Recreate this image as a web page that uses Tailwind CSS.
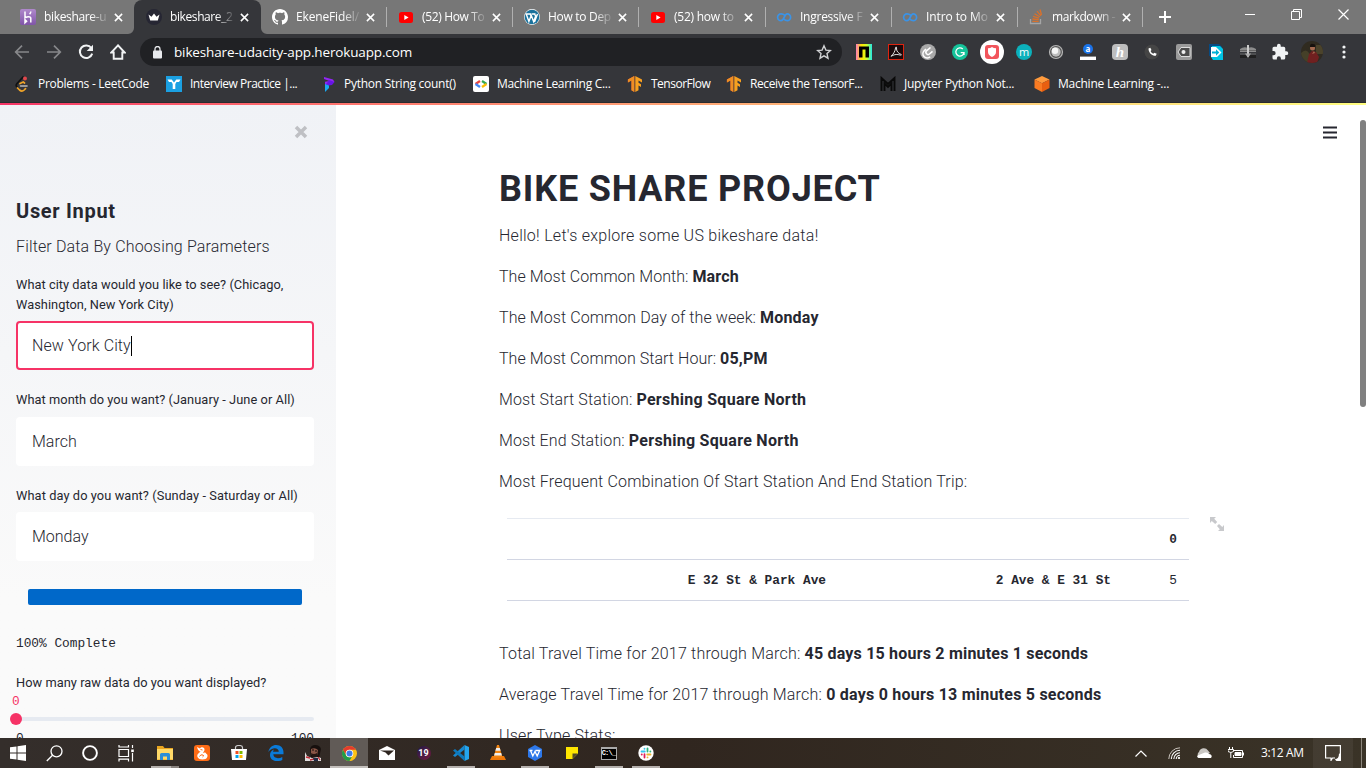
<!DOCTYPE html>
<html lang="en">
<head>
<meta charset="utf-8">
<title>bikeshare_2</title>
<script src="https://cdn.jsdelivr.net/npm/@tailwindcss/browser@4"></script>
</head>
<body class="flex h-[768px] w-[1366px] flex-col overflow-hidden bg-white font-['Roboto',sans-serif] text-[#262730]">

<svg class="hidden">
  <symbol id="close" viewBox="0 0 10 10"><path d="M1 1l8 8M9 1L1 9" stroke="#fff" stroke-width="1.7"/></symbol>
  <symbol id="youtube" viewBox="0 0 16 16"><rect x="1" y="3" width="14" height="11" rx="2.5" fill="#f00"/><path d="M6.3 6v5l4.3-2.5z" fill="#fff"/></symbol>
  <symbol id="infinity" viewBox="0 0 16 16"><path d="M8.6 6.200C7.600 5.200 6.400 4.800 5 4.800a3.400 3.400 0 0 0 0 6.800C8.500 11.600 8 4.800 11.200 4.800a3.400 3.400 0 0 1 0 6.800c-1.300 0-2.300-.5-3.300-1.500" fill="none" stroke="#3b93e6" stroke-width="1.700"/></symbol>
  <symbol id="tensorflow" viewBox="0 0 16 16"><path d="M7.300 0L.8 3.600v3l3.600-2v9.600L7.300 16z" fill="#e55b2d"/><path d="M7.300 0L1 3.600v2.900l3.500-2v9.700L7.300 16z" fill="#ed8e24"/><path d="M8.300 0l6.700 3.600v3l-3.500-2v2.200l2.500 1.500v2.800l-2.500-1.500v4.600L8.300 16z" fill="#f8a020"/></symbol>
</svg>

<header class="flex h-[103px] shrink-0 flex-col border-b border-[#2a2b2e] bg-[#35363a] font-['Open_Sans',sans-serif] text-xs text-white">
  <!-- Tabs -->
  <div class="flex h-[34px] bg-[#777777] pl-2">
    <div class="flex w-[126px] items-center pl-3">
      <svg class="size-4 shrink-0" viewBox="0 0 16 16"><defs><linearGradient id="hk" x2="0" y2="1"><stop stop-color="#b089cc"/><stop offset="1" stop-color="#8055a8"/></linearGradient></defs><rect width="16" height="16" rx="2" fill="url(#hk)"/><path d="M5 2.500v6.200c2-.9 5.800-1.800 5.800.6v4.200M10.800 2.500c0 1.200-.5 2-1.200 2.800M5 10.800v3l1.600-1.500z" fill="none" stroke="#fff" stroke-width="1.500"/></svg>
      <span class="ml-2 w-[66px] overflow-hidden whitespace-nowrap tracking-[-0.35px] mask-r-from-70%">bikeshare-u</span><svg class="ml-1 size-[9px]"><use href="#close"/></svg>
    </div>
    <div class="relative flex w-[127px] items-center rounded-t-lg bg-[#35363a] pl-3">
      <svg class="absolute -left-[6px] bottom-0 size-[6px]" viewBox="0 0 6 6"><path d="M6 0v6H0a6 6 0 0 0 6-6" fill="#35363a"/></svg>
      <svg class="absolute -right-[6px] bottom-0 size-[6px]" viewBox="0 0 6 6"><path d="M0 0v6h6a6 6 0 0 1-6-6" fill="#35363a"/></svg>
      <svg class="size-4 shrink-0" viewBox="0 0 16 16"><circle cx="8" cy="8" r="8" fill="#262633"/><path d="M2.500 5.500l3 2.200L8 4.500l2.500 3.200 3-2.200-1.700 6H4.200z" fill="#fff"/></svg>
      <span class="ml-2 w-[66px] overflow-hidden whitespace-nowrap tracking-[-0.4px] mask-r-from-70%">bikeshare_2</span><svg class="ml-1 size-[9px]"><use href="#close"/></svg>
    </div>
    <div class="flex w-[125px] items-center pl-[11px]">
      <svg class="size-4 shrink-0" viewBox="0 0 16 16"><path fill="#fff" d="M8 0C3.580 0 0 3.580 0 8c0 3.540 2.290 6.530 5.470 7.590.4.070.55-.17.55-.38 0-.19-.01-.82-.01-1.490-2.010.37-2.530-.49-2.690-.94-.09-.23-.48-.94-.82-1.130-.28-.15-.68-.52-.01-.53.63-.01 1.080.58 1.230.82.72 1.210 1.870.87 2.330.66.07-.52.28-.87.51-1.070-1.780-.2-3.640-.89-3.640-3.950 0-.87.31-1.590.82-2.150-.08-.2-.36-1.020.08-2.120 0 0 .67-.21 2.200.82.64-.18 1.320-.27 2-.27s1.360.09 2 .27c1.530-1.040 2.200-.82 2.200-.82.44 1.100.16 1.920.08 2.120.51.56.82 1.270.82 2.150 0 3.070-1.870 3.750-3.650 3.950.29.25.54.73.54 1.480 0 1.070-.01 1.930-.01 2.200 0 .21.15.46.55.38A8 8 0 0 0 16 8c0-4.420-3.580-8-8-8"/></svg>
      <span class="ml-2 w-[66px] overflow-hidden whitespace-nowrap tracking-[-0.15px] mask-r-from-70%">EkeneFidel/</span><svg class="ml-1 size-[9px]"><use href="#close"/></svg>
    </div>
    <div class="flex w-[126px] items-center"><i class="mr-[11px] h-5 w-px bg-[#b0b0b0]"></i>
      <svg class="size-4 shrink-0"><use href="#youtube"/></svg>
      <span class="ml-2 w-[66px] overflow-hidden whitespace-nowrap tracking-[-0.35px] mask-r-from-70%">(52) How To</span><svg class="ml-1 size-[9px]"><use href="#close"/></svg>
    </div>
    <div class="flex w-[126px] items-center"><i class="mr-[11px] h-5 w-px bg-[#b0b0b0]"></i>
      <svg class="size-4 shrink-0" viewBox="0 0 16 16"><circle cx="8" cy="8" r="7.900" fill="#fff"/><circle cx="8" cy="8" r="7.300" fill="#19719c"/><path d="M2.200 5l2.700 7.500L7 7 6.200 5M6.700 5l3 7.800L11.500 7.500c.5-1.600-1.500-2-1-3.200M1.500 5h6M8 5h3.500M10.500 13l3-8" stroke="#fff" stroke-width="1.400" fill="none"/></svg>
      <span class="ml-2 w-[66px] overflow-hidden whitespace-nowrap tracking-[-0.3px] mask-r-from-70%">How to Dep</span><svg class="ml-1 size-[9px]"><use href="#close"/></svg>
    </div>
    <div class="flex w-[127px] items-center"><i class="mr-[11px] h-5 w-px bg-[#b0b0b0]"></i>
      <svg class="size-4 shrink-0"><use href="#youtube"/></svg>
      <span class="ml-2 w-[66px] overflow-hidden whitespace-nowrap tracking-[-0.25px] mask-r-from-70%">(52) how to</span><svg class="ml-1 size-[9px]"><use href="#close"/></svg>
    </div>
    <div class="flex w-[126px] items-center"><i class="mr-[10px] h-5 w-px bg-[#b0b0b0]"></i>
      <svg class="size-4 shrink-0"><use href="#infinity"/></svg>
      <span class="ml-2 w-[66px] overflow-hidden whitespace-nowrap tracking-[-0.25px] mask-r-from-70%">Ingressive F</span><svg class="ml-1 size-[9px]"><use href="#close"/></svg>
    </div>
    <div class="flex w-[126px] items-center"><i class="mr-[10px] h-5 w-px bg-[#b0b0b0]"></i>
      <svg class="size-4 shrink-0"><use href="#infinity"/></svg>
      <span class="ml-2 w-[66px] overflow-hidden whitespace-nowrap tracking-[-0.1px] mask-r-from-70%">Intro to Mo</span><svg class="ml-1 size-[9px]"><use href="#close"/></svg>
    </div>
    <div class="flex w-[125px] items-center"><i class="mr-[10px] h-5 w-px bg-[#b0b0b0]"></i>
      <svg class="size-4 shrink-0" viewBox="0 0 16 16" fill="none"><path d="M2.500 10v4.500h10V10" stroke="#a5a5a5" stroke-width="1.300"/><path d="M4.300 12.300h6.400M4.400 10l6.300.7M5 7.400l6 1.800M6.500 4.700l5.300 3.100M9 2.200l4 4.700M12 .5l1.500 5.500" stroke="#d9712b" stroke-width="1.300"/></svg>
      <span class="ml-2 w-[66px] overflow-hidden whitespace-nowrap tracking-[-0.4px] mask-r-from-70%">markdown -</span><svg class="ml-1 size-[9px]"><use href="#close"/></svg>
    </div>
    <div class="flex w-[52px] items-center"><i class="mr-4 h-5 w-px bg-[#b0b0b0]"></i>
      <svg class="size-3" viewBox="0 0 12 12"><path d="M6 0v12M0 6h12" stroke="#fff" stroke-width="2"/></svg>
    </div>
    <div class="flex h-7 flex-1 items-center justify-end gap-9 pr-[17px]">
      <svg class="size-[10px]" viewBox="0 0 10 10"><path d="M0 5.500h10" stroke="#fff"/></svg>
      <svg class="size-[11px]" viewBox="0 0 11 11" fill="none" stroke="#fff"><path d="M.5 2.500h8v8h-8zM2.500 2.500v-2h8v8h-2"/></svg>
      <svg class="size-[11px]" viewBox="0 0 11 11"><path d="M.5.5l10 10M10.500.5l-10 10" stroke="#fff" stroke-width="1.200"/></svg>
    </div>
  </div>

  <!-- Toolbar -->
  <div class="flex h-[36px] items-center pr-[6px]">
    <div class="flex w-[140px] items-center gap-4 pl-[14px]">
      <svg class="size-4" viewBox="0 0 16 16" fill="none" stroke="#87888b" stroke-width="1.700"><path d="M15 8H2M8 1.700L1.700 8 8 14.300"/></svg>
      <svg class="size-4" viewBox="0 0 16 16" fill="none" stroke="#87888b" stroke-width="1.700"><path d="M1 8h13M8 1.700L14.300 8 8 14.300"/></svg>
      <svg class="size-4" viewBox="0 0 16 16" fill="none"><path d="M13.300 4A6.300 6.300 0 1 0 14.200 9.600" stroke="#f1f3f4" stroke-width="2"/><path d="M15 .8v6.300H8.700z" fill="#f1f3f4"/></svg>
      <svg class="size-4" viewBox="0 0 16 16"><path d="M8 1.300L1.300 8.500h2.400v6.300h8.600V8.500h2.400z" fill="none" stroke="#f1f3f4" stroke-width="1.900"/></svg>
    </div>
    <div class="flex h-7 w-[702px] items-center rounded-full bg-[#202124] pr-[10px] pl-[13px]">
      <svg class="h-[13px] w-[9px]" viewBox="0 0 9 13"><rect y="4.500" width="9" height="8" rx="1" fill="#e8eaed"/><path d="M2 5V3a2.500 2.500 0 0 1 5 0v2" fill="none" stroke="#e8eaed" stroke-width="1.300"/></svg>
      <span class="ml-3 flex-1 text-[13.500px] tracking-[-0.140px]">bikeshare-udacity-app.herokuapp.com</span>
      <svg class="size-4" viewBox="0 0 16 16"><path d="M8 1.800l1.900 4.300 4.500.4-3.400 3.100 1 4.600L8 11.800l-4 2.400 1-4.600-3.400-3.100 4.500-.4z" fill="none" stroke="#d0d1d3" stroke-width="1.400"/></svg>
    </div>
    <div class="ml-[6px] grid flex-1 grid-cols-16 place-items-center">
      <svg class="size-4" viewBox="0 0 16 16"><defs><linearGradient id="pg"><stop stop-color="#ff7dbb"/><stop offset=".35" stop-color="#ffe600"/><stop offset=".65" stop-color="#d4ff22"/><stop offset="1" stop-color="#22e8e8"/></linearGradient></defs><rect width="16" height="16" fill="url(#pg)"/><path d="M3 2.500h10v11H9.500V5.500h-3v8H3z" fill="#000"/></svg>
      <svg class="size-4" viewBox="0 0 16 16"><rect x=".5" y=".5" width="15" height="15" fill="#1c0a0c" stroke="#dd2410"/><path d="M3 12.200c2-1.400 4.300-5 4.600-8.500 0-1.300 1.200-1 .9.300-.4 3 2 5.500 4.400 6.300 1 .4.500 1.200-.6.800-2.800-1-5.600-.9-8.300.7-.8.500-1.300.600-1 .4" fill="none" stroke="#ddd" stroke-width="1"/></svg>
      <svg class="size-4" viewBox="0 0 16 16"><circle cx="8" cy="8" r="8" fill="#a9a9a9"/><path d="M10.500 3.500L6.500 6.800a2.200 2.200 0 0 0 3 3.200l3-2.600M6 5L4.200 6.800a4.200 4.200 0 0 0 6 6" fill="none" stroke="#fff" stroke-width="1.600"/></svg>
      <svg class="size-4" viewBox="0 0 16 16"><circle cx="8" cy="8" r="8" fill="#15c39a"/><path d="M10.800 5A4.100 4.100 0 1 0 12 8.600H8.700M12 8.500V11" fill="none" stroke="#fff" stroke-width="1.300"/></svg>
      <svg class="size-6" viewBox="0 0 24 24"><circle cx="12" cy="12" r="12" fill="#fff"/><rect x="5" y="5" width="14" height="14" rx="3" fill="#f2555c"/><path d="M8 8.300q2.500 0 4-1.200 1.500 1.200 4 1.200V12q0 3-4 5-4-2-4-5z" fill="#fff"/></svg>
      <span class="flex size-4 items-center justify-center rounded-full bg-[#0cb1bb] pb-[2px] text-[11px] leading-none">m</span>
      <svg class="size-4" viewBox="0 0 16 16"><circle cx="8" cy="8" r="6.500" fill="#555" stroke="#b5b5b5" stroke-width="1.200"/><circle cx="8" cy="8" r="4.700" fill="#bdbdbd"/><circle cx="7" cy="6.800" r="3.200" fill="#f5f5f5"/></svg>
      <span class="flex h-4 w-4 flex-col items-center justify-between"><b class="flex size-[10px] items-center justify-center rounded-full bg-[#1a73e8] pb-px text-[8px] leading-none">a</b><i class="h-[4px] w-4 border-t border-[#888] bg-white"></i></span>
      <span class="flex size-4 items-center justify-center rounded-sm bg-[#bdbdbd] font-['Liberation_Serif',serif] text-[15px] leading-none font-bold italic">h</span>
      <svg class="size-4" viewBox="0 0 16 16"><circle cx="8" cy="8" r="7.500" fill="#454545"/><path d="M4.500 4.500c0 4 3 7.300 7.300 7.300l.9-2-2.400-1.100-1 1c-1.200-.5-2.200-1.500-2.700-2.800l.9-.9L6.300 3.700z" fill="#fff"/></svg>
      <svg class="size-4" viewBox="0 0 16 16"><rect width="16" height="16" rx="2" fill="#9a9a9a"/><path d="M2 8l3-4.500h9v9H5z" fill="#4d4d4d" stroke="#ddd"/><circle cx="7.500" cy="8" r="2" fill="#eee"/></svg>
      <svg class="size-4" viewBox="0 0 16 16"><path d="M1 0h10l3 3v9H1z" fill="#064a82"/><path d="M4 2h8l3 3v11H5l-2-3z" fill="#00c3e3"/><path d="M3 3h5l5.500 5.500L9 13H3z" fill="#fff"/><path d="M4 7.500h4V5.300l3.300 3.200L8 11.700V9.500H4z" fill="#00b2d6"/></svg>
      <svg class="size-4" viewBox="0 0 16 16"><path d="M0 5q4-3 8-1 4-2 8 1v3H0z" fill="#8c8c8c"/><path d="M0 11h16v3H0z" fill="#202020"/><path d="M0 6.500h16M0 10h16" stroke="#666"/><path d="M8 1v12" stroke="#ccc" stroke-width="2"/><path d="M5 9.500h6L8 14z" fill="#aaa"/></svg>
      <svg class="size-[18px]" viewBox="0 0 24 24"><path fill="#f1f3f4" d="M20.500 11H19V7a2 2 0 0 0-2-2h-4V3.500a2.500 2.500 0 0 0-5 0V5H4a2 2 0 0 0-2 2v3.800h1.500a2.700 2.700 0 0 1 0 5.400H2V20a2 2 0 0 0 2 2h3.800v-1.500a2.700 2.700 0 0 1 5.400 0V22H17a2 2 0 0 0 2-2v-4h1.500a2.500 2.500 0 0 0 0-5"/></svg>
      <svg class="size-[22px] rounded-full" viewBox="0 0 22 22"><rect width="22" height="22" fill="#302b20"/><path d="M0 12q5-5 8 0v10H0z" fill="#454028"/><path d="M15 4h7v9h-7z" fill="#4b432b"/><path d="M6 22l2-9 3-3 4 1 3 5-2 6z" fill="#702020"/><circle cx="11.500" cy="7" r="2.500" fill="#a56a50"/><path d="M9 6q0-4 3-3 3 0 2 3z" fill="#17110e"/><path d="M11 13l2-3 1 2z" fill="#a56a50"/></svg>
      <svg class="h-[14px] w-1" viewBox="0 0 4 14" fill="#f1f3f4"><circle cx="2" cy="2" r="1.600"/><circle cx="2" cy="7" r="1.600"/><circle cx="2" cy="12" r="1.600"/></svg>
    </div>
  </div>

  <!-- Bookmarks -->
  <div class="flex h-7 items-center pl-[14px] whitespace-nowrap">
    <div class="flex w-[152px] items-center gap-2"><svg class="size-4" viewBox="0 0 16 16" fill="none" stroke-linecap="round"><path d="M9 1L3 7.500c-1 1.200-1 2.500 0 3.500" stroke="#111" stroke-width="1.700"/><path d="M3.500 12l2 2c1.500 1.300 3.300 1.300 4.700 0l1.300-1.300M10.500 7L9.200 5.900 6 7.500" stroke="#f0a428" stroke-width="1.700"/><path d="M6.500 10h6.500" stroke="#bbb" stroke-width="1.600"/><circle cx="11" cy="2.500" r="2" fill="#e0474c"/></svg><span class="tracking-[-0.280px]">Problems - LeetCode</span></div>
    <div class="flex w-[154px] items-center gap-2"><svg class="size-4" viewBox="0 0 16 16"><rect width="16" height="16" fill="#1ba0e2"/><path d="M1.500 3.500h4.200L8 6.500l2.300-3h4.200L13 6h-2.500L9.300 8v5H6.700V8L5.500 6H3z" fill="#fff"/></svg><span class="tracking-[-0.480px]">Interview Practice |...</span></div>
    <div class="flex w-[153px] items-center gap-2"><svg class="size-4" viewBox="0 0 16 16"><path d="M4 1l9 2.500L14.500 6 5 9V5.800l4.500-.9L4 3z" fill="#9227f5"/><path d="M9 4l5.500 2L12 9 5 10z" fill="#6714e6"/><path d="M5 8l4 1.500V12l-4 4z" fill="#19a9f2"/></svg><span class="tracking-[-0.270px]">Python String count()</span></div>
    <div class="flex w-[154px] items-center gap-2"><svg class="size-4" viewBox="0 0 16 16" fill="none" stroke-width="2.300"><rect width="16" height="16" rx="2" fill="#fff"/><path d="M7 5L2.500 8" stroke="#e8453c"/><path d="M2.500 8L7 11" stroke="#4285f4"/><path d="M9 5l4.500 3" stroke="#34a853"/><path d="M13.500 8L9 11" stroke="#fbbc05"/></svg><span class="tracking-[-0.300px]">Machine Learning C...</span></div>
    <div class="flex w-[99px] items-center gap-2"><svg class="size-4"><use href="#tensorflow"/></svg><span class="tracking-[-0.500px]">TensorFlow</span></div>
    <div class="flex w-[154px] items-center gap-2"><svg class="size-4"><use href="#tensorflow"/></svg><span class="tracking-[-0.400px]">Receive the TensorF...</span></div>
    <div class="flex w-[154px] items-center gap-2"><svg class="size-4" viewBox="0 0 16 16"><path d="M1.500 15V2L8 8l6.500-6v13M4.500 15V7.500L8 11l3.500-3.500V15" fill="none" stroke="#0a0a0a" stroke-width="1.900"/></svg><span class="tracking-[-0.250px]">Jupyter Python Not...</span></div>
    <div class="flex items-center gap-2"><svg class="size-4" viewBox="0 0 16 16"><path d="M8 0l7.500 3.500L8 7.200.5 3.500z" fill="#ff9b3d"/><path d="M.5 3.500L8 7.200V16L.5 12z" fill="#fa7b22"/><path d="M15.500 3.500L8 7.200V16l7.500-4z" fill="#e85f10"/></svg><span class="tracking-[-0.240px]">Machine Learning -...</span></div>
  </div>
</header>

<main class="relative flex h-[635px] shrink-0 overflow-hidden">
  <div class="absolute inset-x-0 top-0 h-[2px] bg-linear-to-r from-[#f63366] to-[#fffd80]"></div>

  <aside class="flex w-[336px] shrink-0 flex-col bg-linear-to-b from-[#f0f2f6] to-[#fafafa] to-78% pr-[22px] pl-4 text-[12.800px] leading-5">
    <div class="flex h-[58px] shrink-0 items-center justify-end pr-[6px]">
      <svg class="size-[14px]" viewBox="0 0 14 14"><path d="M2 2l10 10M12 2L2 12" stroke="#bfc0c4" stroke-width="3.500"/></svg>
    </div>
    <h2 class="mt-[38px] text-xl leading-6 font-bold tracking-[0.700px]">User Input</h2>
    <p class="mt-[11px] text-base leading-[26px] font-light tracking-[0.150px]">Filter Data By Choosing Parameters</p>
    <label class="mt-[15px] tracking-[0.040px] whitespace-nowrap">What city data would you like to see? (Chicago,<br>Washington, New York City)</label>
    <div class="mt-[6px] flex h-[49px] shrink-0 items-center rounded border-2 border-[#f63366] bg-white pl-[14px] text-base font-light"><span class="tracking-[0.100px]">New York City</span><i class="h-5 w-px bg-black"></i></div>
    <label class="mt-5 tracking-[0.065px] whitespace-nowrap">What month do you want? (January - June or All)</label>
    <div class="mt-[7px] flex h-[49px] shrink-0 items-center rounded bg-white pl-4 text-base font-light">March</div>
    <label class="mt-5 tracking-[0.090px] whitespace-nowrap">What day do you want? (Sunday - Saturday or All)</label>
    <div class="mt-[6px] flex h-[49px] shrink-0 items-center rounded bg-white pl-4 text-base font-light">Monday</div>
    <div class="mx-3 mt-7 h-4 shrink-0 rounded-xs bg-[#0068c9]"></div>
    <p class="mt-[29px] font-['Liberation_Mono',monospace]">100% Complete</p>
    <label class="mt-[19px] tracking-[0.050px] whitespace-nowrap">How many raw data do you want displayed?</label>
    <p class="-ml-1 font-['Liberation_Mono',monospace] leading-[18px] text-[#f63366]">0</p>
    <div class="mt-[6px] flex h-1 shrink-0 items-center rounded-full bg-[#e6eaf1]"><i class="-ml-[6px] size-3 rounded-full bg-[#f63366]"></i></div>
    <p class="mt-2 flex justify-between font-['Liberation_Mono',monospace]"><span>0</span><span>100</span></p>
  </aside>

  <section class="flex flex-1 flex-col pl-[163px]">
    <div class="flex h-16 shrink-0 items-center justify-end pr-[29px] pb-[6px]">
      <svg class="h-[13px] w-[14px]" viewBox="0 0 14 13"><path d="M0 1.500h14M0 6.500h14M0 11.500h14" stroke="#262730" stroke-width="1.800"/></svg>
    </div>
    <h1 class="text-[36px] leading-[44px] font-bold tracking-[0.830px]">BIKE SHARE PROJECT</h1>
    <div class="mt-3 flex flex-col gap-[15px] text-base leading-[26px] font-light tracking-[0.200px]">
      <p class="tracking-[0.270px]">Hello! Let's explore some US bikeshare data!</p>
      <p class="tracking-[0.030px]">The Most Common Month: <b class="font-bold tracking-[0.200px]">March</b></p>
      <p class="tracking-[0.080px]">The Most Common Day of the week: <b class="font-bold tracking-[0.200px]">Monday</b></p>
      <p class="tracking-[0.050px]">The Most Common Start Hour: <b class="font-bold tracking-[0.200px]">05,PM</b></p>
      <p class="tracking-[0.120px]">Most Start Station: <b class="font-bold tracking-[0.290px]">Pershing Square North</b></p>
      <p class="tracking-[0.120px]">Most End Station: <b class="font-bold tracking-[0.290px]">Pershing Square North</b></p>
      <p class="tracking-[0.170px]">Most Frequent Combination Of Start Station And End Station Trip:</p>
    </div>
    <div class="mt-[23px] ml-2 flex gap-[21px]">
      <div class="grid w-[682px] grid-cols-[331px_285px_66px] border-t border-[#e6eaf1] text-right font-['Liberation_Mono',monospace] text-[12.800px] leading-10 font-bold">
        <span class="col-span-3 h-[41px] border-b border-[#d2d6e3] pt-px pr-3 leading-[39px]">0</span>
        <span class="h-[41px] border-b border-[#d2d6e3] pt-px pr-3 leading-[39px]">E 32 St &amp; Park Ave</span>
        <span class="h-[41px] border-b border-[#d2d6e3] pt-px pr-3 leading-[39px]">2 Ave &amp; E 31 St</span>
        <span class="h-[41px] border-b border-[#d2d6e3] pt-px pr-3 leading-[39px] font-normal">5</span>
      </div>
      <svg class="-mt-px size-[14px]" viewBox="0 0 14 14"><path d="M0 0h6L4.200 1.800 7.200 5 5.200 7 1.800 4 0 6zM14 14H8l1.800-1.800L7 9l2-2 3.300 3L14 8z" fill="#c8c9cc"/></svg>
    </div>
    <div class="mt-10 flex flex-col gap-[15px] text-base leading-[26px] font-light tracking-[0.200px]">
      <p>Total Travel Time for 2017 through March: <b class="font-bold">45 days 15 hours 2 minutes 1 seconds</b></p>
      <p>Average Travel Time for 2017 through March: <b class="font-bold tracking-[0.230px]">0 days 0 hours 13 minutes 5 seconds</b></p>
      <p>User Type Stats:</p>
    </div>
  </section>
  <div class="absolute top-[17px] right-0 h-[287px] w-[6px] rounded-full bg-[#808080]"></div>
</main>

<footer class="flex h-[30px] shrink-0 bg-linear-to-r from-[#342e2b] via-[#30261f] to-[#3a3327] font-['Open_Sans',sans-serif] text-xs text-white">
  <div class="mr-[2px] grid w-36 grid-cols-4 place-items-center">
    <svg class="size-4" viewBox="0 0 16 16" fill="#fff"><path d="M0 2.300L6.500 1.400v6.100H0zM7.500 1.200L16 0v7.500H7.500zM0 8.500h6.500v6.100L0 13.700zM7.500 8.500H16V16l-8.500-1.200z"/></svg>
    <svg class="size-[17px]" viewBox="0 0 17 17" fill="none" stroke="#fff" stroke-width="1.300"><circle cx="10.500" cy="6.300" r="5.500"/><path d="M6.500 10.300L.8 16"/></svg>
    <svg class="size-4" viewBox="0 0 16 16"><circle cx="8" cy="8" r="6.900" fill="none" stroke="#fff" stroke-width="1.900"/></svg>
    <svg class="size-[17px]" viewBox="0 0 17 17" fill="none" stroke="#fff" stroke-width="1.200"><path d="M1 4.500h9.500v7H1zM1 0v2h9.500V0M1 16.500v-2.300h9.500v2.300M14.500 0v3M14.500 8v8.500"/><path d="M13.200 4.500h2.600v2.600h-2.600z" fill="#fff" stroke="none"/></svg>
  </div>
  <div class="grid w-[518px] grid-cols-14">
    <div class="relative flex items-center justify-center"><svg class="size-4" viewBox="0 0 16 16"><path d="M0 1h6l1.500 2H16v12H0z" fill="#e9a520"/><path d="M0 4h16v10.500H0z" fill="#ffd968"/><path d="M3 15V9.500Q3 8 4.500 8h7Q13 8 13 9.500V15h-3v-3.500H6V15z" fill="#2b8ed8"/></svg><i class="absolute bottom-0 left-[5px] flex h-[2px] w-7 bg-[#b5b0ad]"><i class="ml-5 w-2 bg-[#89837f]"></i></i></div>
    <div class="flex items-center justify-center"><svg class="size-4" viewBox="0 0 16 16"><rect width="16" height="16" rx="3" fill="#ff6c16"/><path d="M3 2l3 1.500C7 1.500 11 2 10.500 5c-.3 1.500-1.500 2-1.300 3C10.500 7 12 7.500 12.500 9c1.500.5 1.500 4-1 5-3 1-7 .5-8-2-1-3 2-4 3-5.500C5 6.500 3.500 4.500 3 2" fill="#fff"/><path d="M5.500 11.500q1-2.500 3.500-1.500 1.500 1-.5 2M6.500 4.500l2 .5" fill="none" stroke="#ff6c16"/></svg></div>
    <div class="flex items-center justify-center"><svg class="size-4" viewBox="0 0 16 16"><path d="M4.500 4V2.500q0-2 3.500-2t3.500 2V4" fill="none" stroke="#ccc" stroke-width="1.200"/><path d="M0 4h16l-1 11H1z" fill="#fff"/><path d="M4.500 6h3v3h-3z" fill="#f25022"/><path d="M8.500 6h3v3h-3z" fill="#7fba00"/><path d="M4.500 10h3v3h-3z" fill="#00a4ef"/><path d="M8.500 10h3v3h-3z" fill="#ffb900"/></svg></div>
    <div class="flex items-center justify-center"><svg class="size-4" viewBox="0 0 16 16"><path d="M.3 7C1.300 2.500 4.500 0 8.200 0c4.600 0 7.300 3.200 7.300 7.300v2H5.300c.2 4.300 5.500 4.700 9 2.600v3C9 17.500 2 16 2 10c0-3 1.800-4.700 4-5.500-.7.800-.9 1.500-1 2.300h5.800C10.800 2.300 3.800 2 .3 7" fill="#0a7ad8"/></svg></div>
    <div class="flex items-center justify-center"><svg class="size-4" viewBox="0 0 16 16"><path d="M5 4Q6 0 10 0q5 0 6 4l-2 9H6z" fill="#17100e"/><path d="M6 4q4-2 7 1l-1 6q-4 1-6-2z" fill="#8a5546"/><path d="M7 5h2M10 6h2" stroke="#150c0a"/><path d="M6 8q3 2 6 0v4H7z" fill="#241511"/><path d="M0 7l2 4 5 2 6-1 3 1v3H0z" fill="#e2dede"/><path d="M1 12l4 1M5 15l4-1M13 12l2 3" stroke="#c32b35" stroke-width="1.300"/><path d="M8 13h5v3H9z" fill="#222b44"/></svg></div>
    <div class="relative -ml-px flex items-center justify-center bg-[#615b57]"><svg class="size-[15px]" viewBox="0 0 16 16"><circle cx="8" cy="8" r="8" fill="#fbc116"/><path d="M1.070 4A8 8 0 0 1 14.900 4H8a4 4 0 0 0-3.500 6z" fill="#e33b2e"/><path d="M1.070 4l3.470 6A4 4 0 0 0 8 12h3.460L8 16A8 8 0 0 1 1.070 4" fill="#229b4a"/><path d="M8 12a4 4 0 0 0 3.460-6h3.400A8 8 0 0 1 8 16l3.460-6" fill="#fbc116"/><circle cx="8" cy="8" r="4" fill="#fff"/><circle cx="8" cy="8" r="3.200" fill="#3e7be8"/></svg><i class="absolute inset-x-0 bottom-0 h-[2px] bg-[#c3bfbc]"></i></div>
    <div class="flex items-center justify-center"><svg class="h-[14px] w-4" viewBox="0 0 16 14"><path d="M0 4l8-4 8 4v10H0z" fill="#fff"/><path d="M1 4.500h14L9.500 9.500l-3-3z" fill="#2e251f"/></svg></div>
    <div class="flex items-center justify-center"><span class="flex size-[14px] items-center justify-center rounded-full bg-linear-to-br from-[#1f1645] to-[#741440] font-['Roboto',sans-serif] text-[9px] leading-none font-bold">19</span></div>
    <div class="relative flex items-center justify-center"><svg class="size-4" viewBox="0 0 16 16"><path d="M11.500 0L16 2v12l-4.500 2z" fill="#24a5ee"/><path d="M11.500 0v4.500L2 12 0 10.500z" fill="#1687cf"/><path d="M11.500 16v-4.500L2 4 0 5.500z" fill="#0d79bd"/></svg><i class="absolute bottom-0 left-[5px] h-[2px] w-7 bg-[#b5b0ad]"></i></div>
    <div class="flex items-center justify-center"><svg class="size-4" viewBox="0 0 16 16"><path d="M2 11h12l2 4H0z" fill="#f07808"/><path d="M7 0h2l3.500 12.500h-9z" fill="#f38512"/><path d="M6.200 3h3.600l.8 2.800H5.400zM4.800 8h6.400l.7 2.500H4.100z" fill="#eee"/></svg></div>
    <div class="relative flex items-center justify-center"><svg class="size-4" viewBox="0 0 16 16"><path d="M8 0l7 4v8l-7 4-7-4V4z" fill="#2d78ea"/><path d="M2.500 5.500h3M3.500 5.500L5.800 11 8 6.500l2.200 4.500 2.500-5.500H8.500" fill="none" stroke="#fff" stroke-width="1.300"/></svg><i class="absolute bottom-0 left-[5px] h-[2px] w-7 bg-[#b5b0ad]"></i></div>
    <div class="flex items-center justify-center"><svg class="size-3" viewBox="0 0 12 12"><path d="M0 0h12v6.500L6.500 12H0z" fill="#ffe600"/><path d="M6.500 12V6.500H12z" fill="#514928"/></svg></div>
    <div class="relative flex items-center justify-center"><span class="flex h-[13px] w-4 items-center justify-center border border-t-2 border-[#aaa] bg-black font-['Liberation_Mono',monospace] text-[7px] leading-none font-bold tracking-[-0.8px]">C:\_</span><i class="absolute bottom-0 left-[5px] h-[2px] w-7 bg-[#b5b0ad]"></i></div>
    <div class="relative flex items-center justify-center"><svg class="size-4" viewBox="0 0 16 16" fill="none" stroke-width="1.800" stroke-linecap="round"><circle cx="8" cy="8" r="7.700" fill="#fff"/><path d="M3.500 6.500h3.300M6.500 3.700v.1" stroke="#36c5f0"/><path d="M9.500 3.300v3.300M12.300 6.500h.1" stroke="#2eb67d"/><path d="M9.200 9.500h3.300M9.500 12.300v.1" stroke="#ecb22e"/><path d="M6.500 9.200v3.300M3.700 9.500h.1" stroke="#e01e5a"/></svg><i class="absolute bottom-0 left-[5px] h-[2px] w-7 bg-[#b5b0ad]"></i></div>
  </div>
  <div class="flex flex-1 items-center justify-end">
    <svg class="h-[7px] w-3" viewBox="0 0 12 7"><path d="M.5 6.500L6 1l5.500 5.500" fill="none" stroke="#fff" stroke-width="1.200"/></svg>
    <svg class="ml-[21px] size-3" viewBox="0 0 12 12" fill="none" stroke="#fff"><path d="M.8 12A11.200 11.200 0 0 1 12 .8" stroke="#c9c3bc"/><path d="M3.300 12A8.700 8.700 0 0 1 12 3.300M5.800 12A6.200 6.200 0 0 1 12 5.800M8.200 12A3.800 3.800 0 0 1 12 8.200" stroke-width="1.100"/><circle cx="11" cy="11" r=".8" fill="#fff"/></svg>
    <svg class="ml-4 h-[10px] w-4" viewBox="0 0 16 10"><path d="M3 9a3 3 0 0 1 0-5A5 5 0 0 1 12 2.500L14 5 6 9z" fill="#c9c6c2"/><path d="M2.500 10q-2-1-1-2.500L9 4.500q3-.5 4 1.500c2.500 0 3.500 2.500 2 4z" fill="#fff"/></svg>
    <svg class="ml-4 h-3 w-4" viewBox="0 0 16 12" fill="none" stroke="#fff"><path d="M5 3.500h9.500v7h-9V8M15.500 5.500v3M1.500 0v2.500M4.500 0v2.500M0 2.500h5.500v2q-2.500 2-5.500 0zM2.800 5.500v5.500"/><path d="M7 5.500h6v3H7z" fill="#fff"/></svg>
    <span class="mr-2 ml-[17px] w-11 whitespace-nowrap tracking-[-0.350px]">3:12 AM</span>
    <span class="flex h-full w-10 items-center justify-center bg-white/5"><svg class="size-4" viewBox="0 0 16 16" fill="none" stroke="#fff" stroke-width="1.200"><path d="M10 13H7.500L6 15.500V13H.6V.6h14.800V9"/><path d="M14 8.500A4 4 0 1 1 10 14q4 0 4-5.500" fill="#fff" stroke="none"/></svg></span>
    <i class="mr-1 ml-2 h-full w-px bg-[#8b857b]"></i>
  </div>
</footer>
</body>
</html>
